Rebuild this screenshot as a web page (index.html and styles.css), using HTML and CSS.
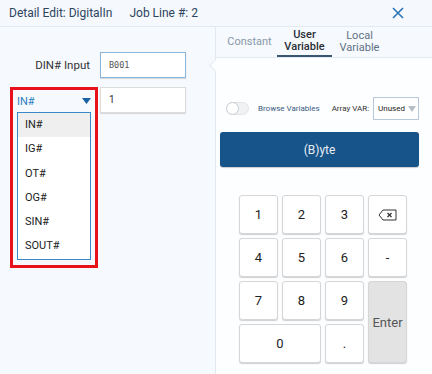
FILE: index.html
```html
<!DOCTYPE html>
<html lang="en">
<head>
    <meta charset="UTF-8">
    <meta name="viewport" content="width=device-width, initial-scale=1.0">
    <title>Detail Edit</title>
    <link rel="stylesheet" href="styles.css">
</head>
<body>
    <div id="dialog">
        <div class="header">
            <span class="title">Detail Edit: DigitalIn</span>
            <span class="job-line">Job Line #: 2</span>
            <svg class="close" width="12" height="12" viewBox="0 0 12 12">
                <path d="M1 1 L11 11 M11 1 L1 11" stroke="#2a74b8" stroke-width="1.6" fill="none"/>
            </svg>
        </div>
        <div class="main">
            <div class="left-panel">
                <div class="field-row">
                    <label class="field-label">DIN# Input</label>
                    <div class="text-box focused mono">B001</div>
                </div>
                <div class="field-row second">
                    <div class="highlight">
                        <div class="select-head">
                            <span>IN#</span>
                            <svg width="9" height="6" viewBox="0 0 9 6"><path d="M0 0 H9 L4.5 6 Z" fill="#1a62a6"/></svg>
                        </div>
                        <ul class="options">
                            <li class="selected">IN#</li>
                            <li>IG#</li>
                            <li>OT#</li>
                            <li>OG#</li>
                            <li>SIN#</li>
                            <li>SOUT#</li>
                        </ul>
                    </div>
                    <div class="text-box">1</div>
                </div>
            </div>
            <div class="right-panel">
                <div class="notch"></div>
                <div class="tabs">
                    <div class="tab">Constant</div>
                    <div class="tab active">User<br>Variable</div>
                    <div class="tab">Local<br>Variable</div>
                </div>
                <div class="content">
                    <div class="options-row">
                        <div class="toggle"><div class="knob"></div></div>
                        <span class="browse">Browse Variables</span>
                        <span class="array-label">Array VAR:</span>
                        <div class="array-select">
                            <span>Unused</span>
                            <svg width="8" height="6" viewBox="0 0 8 6"><path d="M0 0 H8 L4 6 Z" fill="#b8bec6"/></svg>
                        </div>
                    </div>
                    <button class="type-button">(B)yte</button>
                    <div class="keypad">
                        <button class="key">1</button>
                        <button class="key">2</button>
                        <button class="key">3</button>
                        <button class="key">
                            <svg width="19" height="12" viewBox="0 0 19 12">
                                <path d="M5 1 H18 V11 H5 L1 6 Z" stroke="#333" stroke-width="1" fill="none"/>
                                <path d="M9.5 4 L13.5 8 M13.5 4 L9.5 8" stroke="#333" stroke-width="1.3"/>
                            </svg>
                        </button>
                        <button class="key">4</button>
                        <button class="key">5</button>
                        <button class="key">6</button>
                        <button class="key">-</button>
                        <button class="key">7</button>
                        <button class="key">8</button>
                        <button class="key">9</button>
                        <button class="key enter">Enter</button>
                        <button class="key zero">0</button>
                        <button class="key">.</button>
                    </div>
                </div>
            </div>
        </div>
    </div>
</body>
</html>
```

FILE: styles.css
```css
* {
    box-sizing: border-box;
}

body {
    margin: 0;
    font-family: Roboto, "Liberation Sans", sans-serif;
    background: #f6f9fd;
    color: #222;
}

#dialog {
    width: 432px;
    height: 374px;
    display: flex;
    flex-direction: column;
    overflow: hidden;
}

.header {
    height: 27px;
    display: flex;
    align-items: center;
    padding: 0 0 0 9px;
    background: #f5f8fc;
    border-bottom: 1px solid #e3e9f0;
    font-size: 12px;
    color: #2c4560;
}

.job-line {
    margin-left: 17px;
}

.close {
    margin-left: auto;
    margin-right: 28px;
}

.main {
    flex: 1;
    display: flex;
}

/* left side */
.left-panel {
    width: 215px;
    flex-shrink: 0;
    padding: 25px 0 0 10px;
}

.field-row {
    display: flex;
    align-items: flex-start;
}

.field-row.second {
    margin-top: 9px;
}

.field-label {
    width: 90px;
    height: 26px;
    line-height: 26px;
    text-align: right;
    padding-right: 10px;
    font-size: 11.5px;
    color: #333;
}

.text-box {
    width: 86px;
    height: 26px;
    line-height: 24px;
    padding-left: 8px;
    background: #fff;
    border: 1px solid #dcdcdc;
    box-shadow: 0 1px 1px rgba(0, 0, 0, 0.12);
    font-size: 10px;
    color: #333;
}

.text-box.focused {
    border-color: #8ab6dc;
}

.mono {
    font-family: "DejaVu Sans Mono", monospace;
    font-size: 8.5px;
    color: #555;
}

.highlight {
    width: 88px;
    height: 181px;
    border: 3px solid #e8121a;
    margin-right: 2px;
}

.select-head {
    height: 22px;
    display: flex;
    align-items: center;
    justify-content: space-between;
    padding: 0 4px 0 4px;
    font-size: 11px;
    color: #2a7fc0;
}

.options {
    list-style: none;
    margin: 0 0 0 4px;
    padding: 0;
    width: 74px;
    height: 148px;
    background: #fff;
    border: 1px solid #3a88c8;
}

.options li {
    height: 24.3px;
    line-height: 24.3px;
    padding-left: 7px;
    font-size: 11px;
    color: #222;
}

.options li.selected {
    background: #efefef;
}

/* right side */
.right-panel {
    flex: 1;
    min-width: 0;
    position: relative;
    border-left: 1px solid #e3e9f0;
    background: #fdfeff;
    display: flex;
    flex-direction: column;
}

.notch {
    position: absolute;
    left: -5px;
    top: 34px;
    width: 9px;
    height: 9px;
    background: #fdfeff;
    border-left: 1px solid #e3e9f0;
    border-bottom: 1px solid #e3e9f0;
    transform: rotate(45deg);
}

.tabs {
    height: 31px;
    display: flex;
    padding-left: 6px;
    background: #f6f9fd;
    border-bottom: 1px solid #e3e9f0;
}

.tab {
    width: 55px;
    display: flex;
    align-items: center;
    justify-content: center;
    text-align: center;
    font-size: 11px;
    line-height: 12px;
    color: #5f7183;
}

.tab:first-child {
    color: #8898aa;
}

.tab.active {
    color: #2a2f36;
    font-weight: 500;
    border-bottom: 2px solid #3a5670;
}

.content {
    flex: 1;
    display: flex;
    flex-direction: column;
    padding: 39px 12px 0 4px;
}

.options-row {
    height: 23px;
    display: flex;
    align-items: center;
    padding-left: 6px;
    font-size: 8px;
    white-space: nowrap;
}

.options-row > * {
    flex-shrink: 0;
}

.toggle {
    width: 23px;
    height: 13px;
    border-radius: 7px;
    background: #f1f2f4;
    border: 1px solid #e1e3e6;
    position: relative;
}

.knob {
    position: absolute;
    left: -1px;
    top: -1px;
    width: 13px;
    height: 13px;
    border-radius: 50%;
    background: #fff;
    border: 1px solid #c8ccd2;
}

.browse {
    margin-left: 9px;
    color: #3b5b82;
}

.array-label {
    margin-left: 12px;
    color: #333;
}

.array-select {
    margin-left: 4px;
    width: 46px;
    height: 23px;
    display: flex;
    align-items: center;
    justify-content: space-between;
    padding: 0 2px 0 4px;
    background: #fff;
    border: 1px solid #b8c8d8;
    color: #222;
}

.type-button {
    margin-top: 12px;
    width: 199px;
    height: 35px;
    border: none;
    border-radius: 3px;
    background: #175489;
    color: #e8eef5;
    font-family: inherit;
    font-size: 12px;
    box-shadow: 0 1px 1px rgba(0, 0, 0, 0.2);
}

.keypad {
    margin: 28px 0 0 19px;
    display: grid;
    grid-template-columns: repeat(4, 39px);
    grid-template-rows: repeat(4, 39px);
    gap: 4px;
}

.key {
    padding: 0;
    background: #fff;
    border: 1px solid #d6d6d6;
    border-radius: 3px;
    box-shadow: 0 1px 1px rgba(0, 0, 0, 0.18);
    font-family: inherit;
    font-size: 13px;
    color: #222;
    display: flex;
    align-items: center;
    justify-content: center;
}

.key.enter {
    grid-column: 4;
    grid-row: 3 / span 2;
    background: #e3e3e3;
    color: #555;
}

.key.zero {
    grid-column: 1 / span 2;
}
```
